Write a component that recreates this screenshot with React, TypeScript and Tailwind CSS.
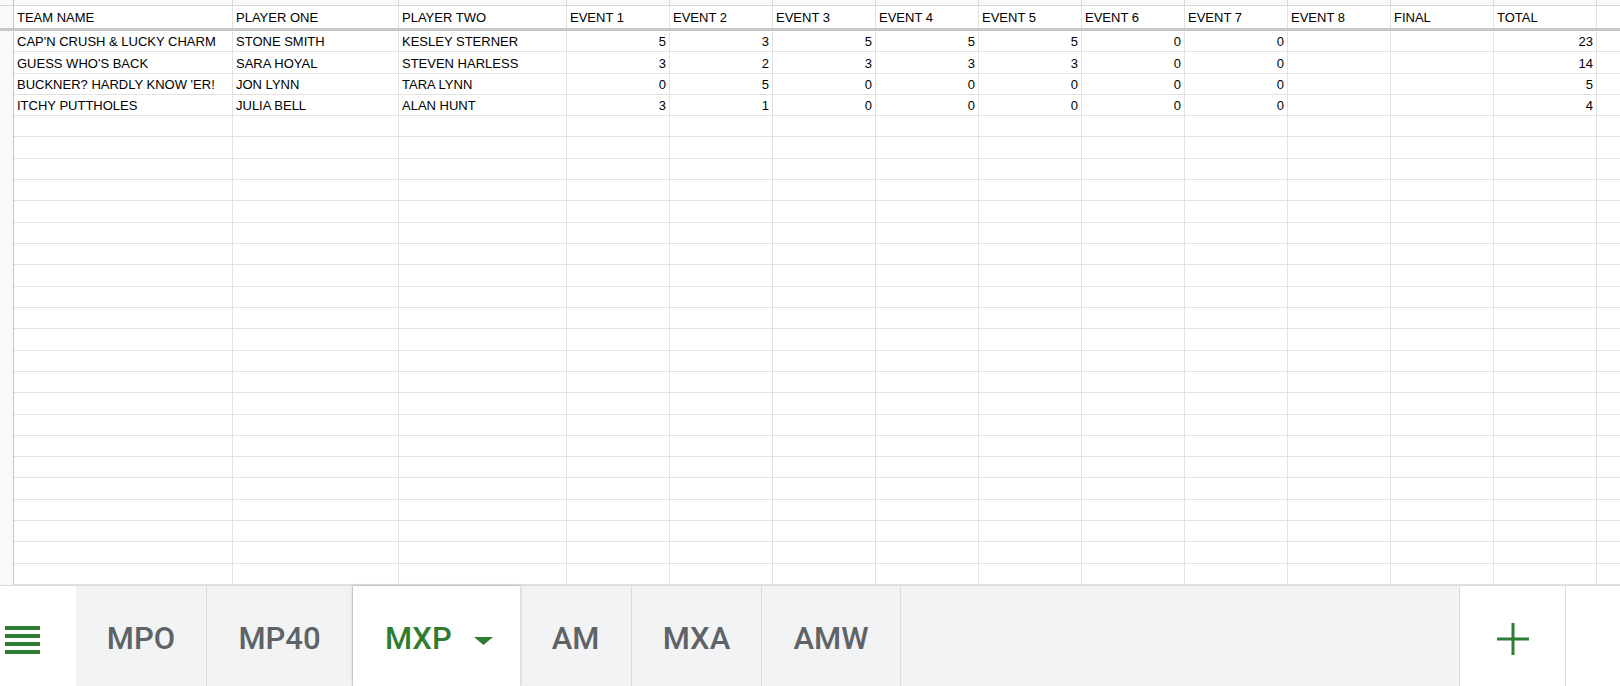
import React from "react";

const headers = ["TEAM NAME", "PLAYER ONE", "PLAYER TWO", "EVENT 1", "EVENT 2", "EVENT 3", "EVENT 4", "EVENT 5", "EVENT 6", "EVENT 7", "EVENT 8", "FINAL", "TOTAL"];

const teams = [
    ["CAP'N CRUSH & LUCKY CHARM", "STONE SMITH", "KESLEY STERNER", "5", "3", "5", "5", "5", "0", "0", "", "", "23"],
    ["GUESS WHO'S BACK", "SARA HOYAL", "STEVEN HARLESS", "3", "2", "3", "3", "3", "0", "0", "", "", "14"],
    ["BUCKNER? HARDLY KNOW 'ER!", "JON LYNN", "TARA LYNN", "0", "5", "0", "0", "0", "0", "0", "", "", "5"],
    ["ITCHY PUTTHOLES", "JULIA BELL", "ALAN HUNT", "3", "1", "0", "0", "0", "0", "0", "", "", "4"],
];

const emptyRows = Array.from({ length: 22 });

const tabs = [
    { name: "MPO", w: "w-[131px]" },
    { name: "MP40", w: "w-[146px]" },
    { name: "MXP", w: "w-[167px]", active: true },
    { name: "AM", w: "w-[112px]" },
    { name: "MXA", w: "w-[130px]" },
    { name: "AMW", w: "w-[139px]" },
];

const cols = "grid grid-cols-[14px_219px_166px_168px_repeat(10,103px)_1fr]";

function Row({ cells, head }: { cells: string[]; head?: boolean }) {
    return (
        <div className={cols + (head ? " h-[25px] border-b-[3px] border-[#c8c8c8]" : " h-[21.45px]")}>
            <div className="bg-[#f8f9fa] border-r border-[#c4c4c4]" />
            {cells.map((c, i) => (
                <div
                    key={i}
                    className={
                        "flex items-end leading-[13px] px-[3px] border-r border-[#e2e2e2] whitespace-nowrap overflow-hidden " +
                        (head ? "pb-[4px] " : "pb-[3px] border-b ") +
                        (!head && i >= 3 ? "justify-end" : "")
                    }
                >
                    {c}
                </div>
            ))}
            <div className={head ? "" : "border-b border-[#e2e2e2]"} />
        </div>
    );
}

export default function App() {
    return (
        <div className="w-[1620px] h-[686px] flex flex-col bg-white overflow-hidden text-[13px] text-black" style={{ fontFamily: "'Liberation Sans', Arial, sans-serif" }}>
            <div className="h-[585px] flex flex-col overflow-hidden">
                <div className={cols + " h-[6px] bg-[#f8f9fa] border-b border-[#d6d6d6] shrink-0"}>
                    <div className="border-r border-[#c4c4c4]" />
                    {headers.map((h) => (
                        <div key={h} className="border-r border-[#d6d6d6]" />
                    ))}
                    <div />
                </div>
                <Row cells={headers} head />
                {teams.map((t) => (
                    <Row key={t[0]} cells={t} />
                ))}
                {emptyRows.map((_, i) => (
                    <Row key={i} cells={headers.map(() => "")} />
                ))}
            </div>

            <div className="flex-1 flex bg-[#f1f3f4] border-t border-[#dadce0] text-[31px] font-medium text-[#5f6368]" style={{ fontFamily: "Roboto, Arial, sans-serif" }}>
                <div className="w-[76px] bg-white flex items-center pl-[5px] pt-[8px]">
                    <div className="flex flex-col gap-[4.5px]">
                        <div className="w-[35px] h-[3.5px] bg-[#2f7d32]" />
                        <div className="w-[35px] h-[3.5px] bg-[#2f7d32]" />
                        <div className="w-[35px] h-[3.5px] bg-[#2f7d32]" />
                        <div className="w-[35px] h-[3.5px] bg-[#2f7d32]" />
                    </div>
                </div>
                {tabs.map((t) =>
                    t.active ? (
                        <div key={t.name} className={t.w + " bg-white flex items-center pl-[32px] pt-[6px] text-[#2f7d32] shadow-[0_0_3px_rgba(0,0,0,0.25)] relative"}>
                            <span>{t.name}</span>
                            <svg width="19" height="8" viewBox="0 0 19 8" className="ml-[22px] mt-[4px]">
                                <polygon points="0,0 19,0 9.5,8" fill="#2f7d32" />
                            </svg>
                        </div>
                    ) : (
                        <div key={t.name} className={t.w + " flex items-center justify-center pt-[6px] border-r border-[#dadce0]"}>
                            {t.name}
                        </div>
                    )
                )}
                <div className="flex-1" />
                <div className="w-[106px] bg-white border-l border-[#dadce0] flex items-center justify-center pt-[5px]">
                    <svg width="32" height="32" viewBox="0 0 32 32">
                        <rect x="14.5" y="0" width="3" height="32" fill="#2f7d32" />
                        <rect x="0" y="14.5" width="32" height="3" fill="#2f7d32" />
                    </svg>
                </div>
                <div className="flex-1 max-w-[55px] bg-white border-l border-[#dadce0]" />
            </div>
        </div>
    );
}
